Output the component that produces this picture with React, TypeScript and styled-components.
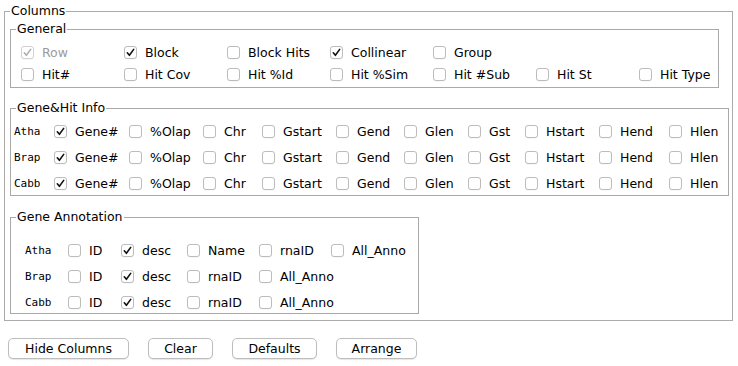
import React from 'react';
import styled, { createGlobalStyle } from 'styled-components';

const Global = createGlobalStyle`
  html, body { margin: 0; padding: 0; background: #ffffff; }
  body {
    font-family: "DejaVu Sans", "Liberation Sans", sans-serif;
    font-size: 12.5px;
    color: #000;
  }
`;

const Page = styled.div`
  box-sizing: border-box;
  width: 738px;
  height: 366px;
  padding: 3px 0 0 4px;
`;

const Group = styled.fieldset<{ $w: number; $mt: number; $pt: number; $pb: number; $line?: string }>`
  box-sizing: border-box;
  width: ${(p) => p.$w}px;
  min-width: 0;
  margin: ${(p) => p.$mt}px 0 0 0;
  padding: ${(p) => p.$pt}px 0 ${(p) => p.$pb}px 5px;
  border: 1px solid ${(p) => p.$line ?? '#a9a9a9'};
`;

const Title = styled.legend`
  padding: 0 1px;
  font-size: 12.5px;
  line-height: 16px;
  color: #000;
`;

const Lines = styled.div<{ $gap: number; $pl: number }>`
  display: flex;
  flex-direction: column;
  gap: ${(p) => p.$gap}px;
  padding-left: ${(p) => p.$pl}px;
`;

const Line = styled.div<{ $cols: string }>`
  display: grid;
  grid-template-columns: ${(p) => p.$cols};
  height: 22px;
  align-items: center;
`;

const SpeciesLabel = styled.span<{ $shift: number }>`
  font-family: "DejaVu Sans Mono", "Liberation Mono", monospace;
  font-size: 11px;
  color: #000;
  margin-left: ${(p) => p.$shift}px;
`;

const Item = styled.label<{ $disabled?: boolean }>`
  display: flex;
  align-items: center;
  gap: 8px;
  white-space: nowrap;
  color: ${(p) => (p.$disabled ? '#9b9b9b' : '#000')};
`;

const Box = styled.span<{ $disabled?: boolean }>`
  box-sizing: border-box;
  width: 13px;
  height: 13px;
  border: 1px solid ${(p) => (p.$disabled ? '#d2d2d2' : '#bcbcbc')};
  border-radius: 3px;
  background: #fff;
  box-shadow: 0 0.5px 0.5px rgba(0, 0, 0, 0.06);
  display: flex;
  align-items: center;
  justify-content: center;
  flex: none;
`;

const ButtonRow = styled.div`
  display: flex;
  gap: 19px;
  margin-top: 17px;
  padding-left: 4px;
`;

const Button = styled.button<{ $w: number }>`
  box-sizing: border-box;
  width: ${(p) => p.$w}px;
  height: 21px;
  padding: 0;
  border: 1px solid #bdbdbd;
  border-radius: 5px;
  background: #ffffff;
  box-shadow: 0 1px 1px rgba(0, 0, 0, 0.1);
  font-family: "DejaVu Sans", "Liberation Sans", sans-serif;
  font-size: 12.5px;
  color: #000;
`;

type CB = { label: string; checked?: boolean; disabled?: boolean };

const Check: React.FC<CB> = ({ label, checked, disabled }) => (
  <Item $disabled={disabled}>
    <Box $disabled={disabled}>
      {checked && (
        <svg width="11" height="11" viewBox="0 0 11 11">
          <path
            d="M2.3 5.8 L4.4 8.3 L8.7 2.4"
            fill="none"
            stroke={disabled ? '#b0b0b0' : '#121212'}
            strokeWidth="1.6"
            strokeLinecap="round"
            strokeLinejoin="round"
          />
        </svg>
      )}
    </Box>
    {label}
  </Item>
);

const generalCols = 'repeat(7, 103px)';
const generalRows: CB[][] = [
  [
    { label: 'Row', checked: true, disabled: true },
    { label: 'Block', checked: true },
    { label: 'Block Hits' },
    { label: 'Collinear', checked: true },
    { label: 'Group' },
  ],
  [
    { label: 'Hit#' },
    { label: 'Hit Cov' },
    { label: 'Hit %Id' },
    { label: 'Hit %Sim' },
    { label: 'Hit #Sub' },
    { label: 'Hit St' },
    { label: 'Hit Type' },
  ],
];

const species = ['Atha', 'Brap', 'Cabb'];
const hitCols = '38px 75px 74px 59px 74px 68px 64px 57px 74px 70px 1fr';
const hitItems = ['%Olap', 'Chr', 'Gstart', 'Gend', 'Glen', 'Gst', 'Hstart', 'Hend', 'Hlen'];

const annoCols = '43px 53px 66px 72px 72px 1fr';
const annoRows: { sp: string; items: string[] }[] = [
  { sp: 'Atha', items: ['Name', 'rnaID', 'All_Anno'] },
  { sp: 'Brap', items: ['rnaID', 'All_Anno'] },
  { sp: 'Cabb', items: ['rnaID', 'All_Anno'] },
];

export default function App() {
  return (
    <Page>
      <Global />
      <Group $w={729} $mt={0} $pt={2} $pb={6} $line="#ababab">
        <Title>Columns</Title>

        <Group $w={709} $mt={0} $pt={4} $pb={2}>
          <Title>General</Title>
          <Lines $gap={0} $pl={5}>
            {generalRows.map((row, i) => (
              <Line key={i} $cols={generalCols}>
                {row.map((c) => (
                  <Check key={c.label} {...c} />
                ))}
              </Line>
            ))}
          </Lines>
        </Group>

        <Group $w={719} $mt={12} $pt={4} $pb={1}>
          <Title>Gene&amp;Hit Info</Title>
          <Lines $gap={4} $pl={0}>
            {species.map((sp) => (
              <Line key={sp} $cols={hitCols}>
                <SpeciesLabel $shift={-2}>{sp}</SpeciesLabel>
                <Check label="Gene#" checked />
                {hitItems.map((h) => (
                  <Check key={h} label={h} />
                ))}
              </Line>
            ))}
          </Lines>
        </Group>

        <Group $w={409} $mt={13} $pt={14} $pb={0}>
          <Title>Gene Annotation</Title>
          <Lines $gap={4} $pl={9}>
            {annoRows.map((r) => (
              <Line key={r.sp} $cols={annoCols}>
                <SpeciesLabel $shift={0}>{r.sp}</SpeciesLabel>
                <Check label="ID" />
                <Check label="desc" checked />
                {r.items.map((it) => (
                  <Check key={it} label={it} />
                ))}
              </Line>
            ))}
          </Lines>
        </Group>
      </Group>

      <ButtonRow>
        <Button $w={121}>Hide Columns</Button>
        <Button $w={65}>Clear</Button>
        <Button $w={85}>Defaults</Button>
        <Button $w={81}>Arrange</Button>
      </ButtonRow>
    </Page>
  );
}
